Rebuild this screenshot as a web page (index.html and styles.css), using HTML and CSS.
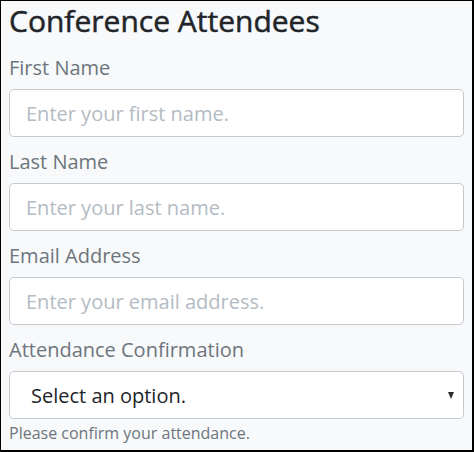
FILE: index.html
```html
<!DOCTYPE html>
<html lang="en">
<head>
<meta charset="utf-8">
<title>Conference Attendees</title>
<link rel="stylesheet" href="styles.css">
</head>
<body>
<div class="frame">
  <h2 class="title">Conference Attendees</h2>
  <form class="form">
    <div class="group">
      <label class="label" for="first">First Name</label>
      <input class="control" id="first" type="text" placeholder="Enter your first name.">
    </div>
    <div class="group">
      <label class="label" for="last">Last Name</label>
      <input class="control" id="last" type="text" placeholder="Enter your last name.">
    </div>
    <div class="group">
      <label class="label" for="email">Email Address</label>
      <input class="control" id="email" type="email" placeholder="Enter your email address.">
    </div>
    <div class="group">
      <label class="label" for="attend">Attendance Confirmation</label>
      <div class="select-wrap">
        <select class="control select" id="attend">
          <option>Select an option.</option>
          <option>Yes</option>
          <option>No</option>
        </select>
        <span class="arrow"></span>
      </div>
      <small class="help">Please confirm your attendance.</small>
    </div>
  </form>
</div>
</body>
</html>
```

FILE: styles.css
```css
html, body {
  margin: 0;
  padding: 0;
}

body {
  font-family: "Open Sans", "Liberation Sans", sans-serif;
  background: #ffffff;
}

.frame {
  box-sizing: border-box;
  width: 474px;
  height: 452px;
  border-style: solid;
  border-color: #000;
  border-width: 1px 2px 2px 1px;
  background: #f8f9fa;
  padding: 0 8px 0 8px;
  overflow: hidden;
}

.title {
  margin: 0;
  padding-top: 2px;
  font-size: 30px;
  font-weight: 400;
  -webkit-text-stroke: 0.5px #212529;
  line-height: 36px;
  color: #212529;
}

.form {
  margin: 0;
}

.group {
  display: flex;
  flex-direction: column;
  margin-top: 10px;
}

.group:first-child {
  margin-top: 14px;
}

.label {
  display: block;
  font-size: 20px;
  line-height: 30px;
  color: #6c757d;
  margin-bottom: 6px;
}

.control {
  box-sizing: border-box;
  width: 100%;
  height: 48px;
  margin: 0;
  padding: 0 16px;
  font-family: "Open Sans", "Liberation Sans", sans-serif;
  font-size: 20px;
  color: #212529;
  background: #ffffff;
  border: 1px solid #c3c8ce;
  border-radius: 4.8px;
  outline: none;
}

.control::placeholder {
  color: #b3bbc3;
  opacity: 1;
}

.select-wrap {
  position: relative;
}

.select {
  appearance: none;
  -webkit-appearance: none;
  padding-left: 21px;
}

.arrow {
  position: absolute;
  right: 10px;
  top: 21px;
  width: 0;
  height: 0;
  border-left: 3.5px solid transparent;
  border-right: 3.5px solid transparent;
  border-top: 7px solid #2b2b2b;
  pointer-events: none;
}

.help {
  display: block;
  margin-top: 2px;
  font-size: 16px;
  line-height: 24px;
  color: #6c757d;
}
```
